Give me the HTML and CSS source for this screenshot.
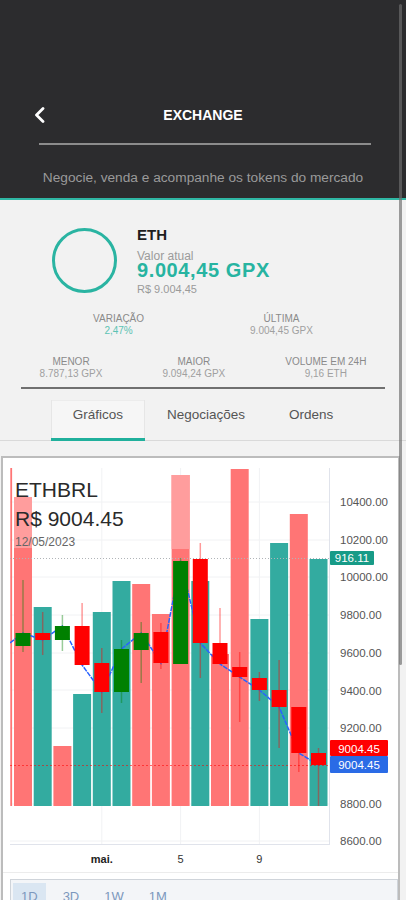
FILE: index.html
```html
<!DOCTYPE html>
<html lang="pt-BR">
<head>
<meta charset="utf-8">
<title>Exchange</title>
<link rel="stylesheet" href="styles.css">
</head>
<body>
<header class="top">
  <div class="titlebar">
    <span class="back"><svg width="12" height="16" viewBox="0 0 12 16"><path d="M9 1.5 L2.5 8 L9 14.5" fill="none" stroke="#fff" stroke-width="2.8" stroke-linecap="round" stroke-linejoin="round"/></svg></span>
    <h1 class="title">EXCHANGE</h1>
    <span></span>
  </div>
  <div class="rule"></div>
  <p class="subtitle">Negocie, venda e acompanhe os tokens do mercado</p>
</header>

<main class="content">
  <section class="token">
    <div class="coin"></div>
    <div class="token-info">
      <div class="sym">ETH</div>
      <div class="lbl">Valor atual</div>
      <div class="price">9.004,45 GPX</div>
      <div class="fiat">R$ 9.004,45</div>
    </div>
  </section>

  <section class="stats one">
    <div class="stat"><div class="stat-k">VARIAÇÃO</div><div class="stat-v up">2,47%</div></div>
    <div class="stat"><div class="stat-k">ÚLTIMA</div><div class="stat-v">9.004,45 GPX</div></div>
  </section>
  <section class="stats two">
    <div class="stat"><div class="stat-k">MENOR</div><div class="stat-v">8.787,13 GPX</div></div>
    <div class="stat"><div class="stat-k">MAIOR</div><div class="stat-v">9.094,24 GPX</div></div>
    <div class="stat"><div class="stat-k">VOLUME EM 24H</div><div class="stat-v">9,16 ETH</div></div>
  </section>
  <div class="divider"></div>

  <nav class="tabs">
    <div class="tab active">Gráficos</div>
    <div class="tab">Negociações</div>
    <div class="tab">Ordens</div>
  </nav>

  <section class="chart">
    <div class="chart-row">
      <div class="plot">
        <svg width="320" height="377" viewBox="10 468 320 377">
          <g class="grid">
            <line x1="10" x2="330" y1="502" y2="502"/>
            <line x1="10" x2="330" y1="540" y2="540"/>
            <line x1="10" x2="330" y1="577" y2="577"/>
            <line x1="10" x2="330" y1="615" y2="615"/>
            <line x1="10" x2="330" y1="653" y2="653"/>
            <line x1="10" x2="330" y1="690" y2="690"/>
            <line x1="10" x2="330" y1="728" y2="728"/>
            <line x1="10" x2="330" y1="804" y2="804"/>
            <line x1="10" x2="330" y1="841" y2="841"/>
            <line x1="101.8" x2="101.8" y1="468" y2="845"/>
            <line x1="180.6" x2="180.6" y1="468" y2="845"/>
            <line x1="259.4" x2="259.4" y1="468" y2="845"/>
          </g>
          <g>
            <rect class="vd" x="10.3" y="468" width="1.8" height="338"/>
            <rect class="vd" x="14" y="497" width="18" height="309"/>
            <rect class="vl" x="14" y="497" width="18" height="51"/>
            <rect class="vu" x="33.7" y="607" width="18" height="199"/>
            <rect class="vd" x="53.4" y="746" width="18" height="60"/>
            <rect class="vu" x="73.1" y="694" width="18" height="112"/>
            <rect class="vu" x="92.8" y="612" width="18" height="194"/>
            <rect class="vu" x="112.5" y="581" width="18" height="225"/>
            <rect class="vd" x="132.2" y="584" width="18" height="222"/>
            <rect class="vd" x="151.9" y="614" width="18" height="192"/>
            <rect class="vd" x="171.6" y="475" width="18" height="331"/>
            <rect class="vl" x="171.6" y="475" width="18" height="74"/>
            <rect class="vu" x="191.3" y="581" width="18" height="225"/>
            <rect class="vd" x="211" y="654" width="18" height="152"/>
            <rect class="vd" x="230.7" y="469" width="18" height="337"/>
            <rect class="vu" x="250.4" y="619" width="18" height="187"/>
            <rect class="vu" x="270.1" y="543" width="18" height="263"/>
            <rect class="vd" x="289.8" y="514" width="18" height="292"/>
            <rect class="vu" x="309.5" y="559" width="18" height="247"/>
          </g>
          <line class="pl-vol" x1="10" x2="330" y1="558.5" y2="558.5"/>
          <line class="pl-last" x1="10" x2="330" y1="765.5" y2="765.5"/>
          <polyline class="close" points="10,643 23,633 42.7,640 62.4,626 82.1,665 101.8,692 121.5,649 141.2,633 160.9,663 180.6,561 200.3,643 220,664 239.7,677 259.4,690 279.1,707 298.8,753 318.5,765"/>
          <g class="wu">
            <line x1="23" x2="23" y1="580" y2="652"/>
            <line x1="62.4" x2="62.4" y1="615" y2="651"/>
            <line x1="121.5" x2="121.5" y1="640" y2="703"/>
            <line x1="141.2" x2="141.2" y1="622" y2="683"/>
            <line x1="180.6" x2="180.6" y1="558" y2="664"/>
          </g>
          <g class="wd">
            <line x1="42.7" x2="42.7" y1="612" y2="655"/>
            <line x1="82.1" x2="82.1" y1="603" y2="665"/>
            <line x1="101.8" x2="101.8" y1="648" y2="713"/>
            <line x1="160.9" x2="160.9" y1="623" y2="669"/>
            <line x1="200.3" x2="200.3" y1="543" y2="678"/>
            <line x1="220" x2="220" y1="608" y2="664"/>
            <line x1="239.7" x2="239.7" y1="652" y2="722"/>
            <line x1="259.4" x2="259.4" y1="672" y2="701"/>
            <line x1="279.1" x2="279.1" y1="660" y2="748"/>
            <line x1="298.8" x2="298.8" y1="707" y2="772"/>
            <line x1="318.5" x2="318.5" y1="748" y2="806"/>
          </g>
          <g class="bu">
            <rect x="15.5" y="633" width="15" height="13"/>
            <rect x="54.9" y="626" width="15" height="14"/>
            <rect x="114" y="649" width="15" height="43"/>
            <rect x="133.7" y="633" width="15" height="17"/>
            <rect x="173.1" y="561" width="15" height="103"/>
          </g>
          <g class="bd">
            <rect x="35.2" y="633" width="15" height="7"/>
            <rect x="74.6" y="626" width="15" height="39"/>
            <rect x="94.3" y="663" width="15" height="29"/>
            <rect x="153.4" y="632" width="15" height="31"/>
            <rect x="192.8" y="559" width="15" height="84"/>
            <rect x="212.5" y="643" width="15" height="21"/>
            <rect x="232.2" y="667" width="15" height="10"/>
            <rect x="251.9" y="678" width="15" height="12"/>
            <rect x="271.6" y="690" width="15" height="17"/>
            <rect x="291.3" y="707" width="15" height="46"/>
            <rect x="311" y="753" width="15" height="12"/>
          </g>
          <line class="frame" x1="329.5" x2="329.5" y1="468" y2="845"/>
          <line class="frame" x1="10" x2="330" y1="844.5" y2="844.5"/>
        </svg>
        <div class="legend">
          <div class="pair">ETHBRL</div>
          <div class="last">R$ 9004.45</div>
          <div class="date">12/05/2023</div>
        </div>
      </div>
      <div class="axis">
        <svg width="68" height="377" viewBox="330 468 68 377">
          <text class="ax" x="340" y="506">10400.00</text>
          <text class="ax" x="340" y="543.7">10200.00</text>
          <text class="ax" x="340" y="581.4">10000.00</text>
          <text class="ax" x="340" y="619.1">9800.00</text>
          <text class="ax" x="340" y="656.8">9600.00</text>
          <text class="ax" x="340" y="694.5">9400.00</text>
          <text class="ax" x="340" y="732.2">9200.00</text>
          <text class="ax" x="340" y="807.6">8800.00</text>
          <text class="ax" x="340" y="845.3">8600.00</text>
          <rect class="tag-vol" x="330" y="551" width="44" height="14" rx="1"/>
          <text class="tag-t" x="352" y="562">916.11</text>
          <rect class="tag-red" x="330" y="740" width="58" height="16" rx="1"/>
          <text class="tag-t" x="359" y="752.5">9004.45</text>
          <rect class="tag-blue" x="330" y="756" width="58" height="17" rx="1"/>
          <text class="tag-t" x="359" y="769">9004.45</text>
        </svg>
      </div>
    </div>
    <div class="timeaxis">
      <svg width="320" height="27" viewBox="10 845 320 27">
        <text class="tx strong" x="101.8" y="863">mai.</text>
        <text class="tx" x="180.6" y="863">5</text>
        <text class="tx" x="259.4" y="863">9</text>
      </svg>
    </div>
    <div class="chart-sep"></div>
    <div class="toolbar">
      <span class="range active">1D</span>
      <span class="range">3D</span>
      <span class="range">1W</span>
      <span class="range">1M</span>
    </div>
  </section>
</main>

<div class="scrollthumb"></div>
</body>
</html>
```

FILE: styles.css
```css
* { box-sizing: border-box; margin: 0; padding: 0; }

html, body {
  width: 406px;
  height: 900px;
  overflow: hidden;
  background: #f2f2f2;
}

body {
  position: relative;
  font-family: "Liberation Sans", Arial, sans-serif;
}

/* header */
.top {
  height: 200px;
  background: #2c2c2e;
  border-bottom: 2px solid #2fb7a4;
  padding-top: 105px;
}
.titlebar {
  display: grid;
  grid-template-columns: 1fr auto 1fr;
  align-items: center;
  height: 20px;
}
.back {
  display: flex;
  align-items: center;
  padding-left: 34px;
  height: 20px;
}
.title {
  font-size: 14px;
  font-weight: 700;
  line-height: 20px;
  color: #fff;
}
.rule {
  height: 2px;
  background: #8c8c8c;
  margin: 18px 35px 0 39px;
}
.subtitle {
  margin-top: 24px;
  text-align: center;
  font-size: 13.7px;
  line-height: 18px;
  color: #9a9a9a;
}

/* token */
.token {
  display: flex;
  gap: 20px;
  padding-left: 52px;
  margin-top: 25.5px;
}
.coin {
  flex: none;
  width: 65px;
  height: 65px;
  margin-top: 2.5px;
  border: 3px solid #2ab4a2;
  border-radius: 50%;
}
.sym {
  font-size: 15px;
  font-weight: 700;
  line-height: 18px;
  color: #1e1e1e;
}
.lbl {
  margin-top: 6.9px;
  font-size: 12px;
  line-height: 12px;
  color: #9b9b9b;
}
.price {
  font-size: 20px;
  font-weight: 700;
  line-height: 16px;
  letter-spacing: 0.6px;
  color: #27b4a1;
}
.fiat {
  margin-top: 4.3px;
  font-size: 11px;
  line-height: 13px;
  color: #9a9a9a;
}

/* stats */
.stats {
  display: flex;
  justify-content: center;
  text-align: center;
  font-size: 10px;
  line-height: 12px;
}
.stats.one { gap: 106px; margin-top: 17.8px; }
.stats.two { gap: 60px; margin-top: 18.2px; }
.stat-k { color: #8a8a8a; }
.stat-v { color: #a0a0a0; }
.stat-v.up { color: #5cc3b4; }

.divider {
  height: 2px;
  background: #707070;
  margin: 7.3px 21px 0 21px;
}

/* tabs */
.tabs {
  display: flex;
  justify-content: center;
  margin-top: 11px;
  border-bottom: 1px solid #d9d9d9;
}
.tab {
  padding: 7px 22px 15px;
  margin-bottom: -1px;
  font-size: 13.5px;
  line-height: 16px;
  color: #555;
  border-bottom: 3px solid transparent;
}
.tab.active {
  background: #f6f6f6;
  border-bottom-color: #20b09c;
  box-shadow: inset 1px 0 #e6e6e6, inset -1px 0 #e6e6e6, inset 0 1px #ececec;
}

/* chart */
.chart {
  width: 399px;
  margin: 15px 0 0 1px;
  padding: 10px 0 0 7px;
  background: #fff;
  border: 2px solid #bcbcbc;
  border-bottom: none;
}
.chart-row { display: flex; }
.plot {
  position: relative;
  width: 320px;
  height: 377px;
}
.plot svg, .axis svg, .timeaxis svg { display: block; }

.grid line { stroke: #f1f2f4; stroke-width: 1; }
.vd { fill: #ff7575; }
.vl { fill: #ff9d9d; }
.vu { fill: #33aba0; }
.pl-vol { stroke: #b0b4b8; stroke-width: 1; stroke-dasharray: 1 2; }
.pl-last { stroke: rgba(255, 0, 0, 0.55); stroke-width: 1; stroke-dasharray: 2 2; }
.close { fill: none; stroke: #2962ff; stroke-width: 1.5; stroke-dasharray: 5 1; }
.wu line { stroke: #008000; stroke-opacity: 0.4; stroke-width: 1.5; }
.wd line { stroke: #ff0000; stroke-opacity: 0.4; stroke-width: 1.5; }
.bu rect { fill: #008000; }
.bd rect { fill: #ff0000; }
.frame { stroke: #e0e3eb; stroke-width: 1; }

.legend {
  position: absolute;
  left: 5px;
  top: 10.4px;
  color: #2a2a2a;
}
.pair { font-size: 21px; line-height: 24px; }
.last { font-size: 21px; line-height: 34px; }
.date { margin-top: -1px; font-size: 12px; line-height: 14px; color: #666; }

.axis { width: 68px; height: 377px; }
.ax { font-family: "Liberation Sans", Arial, sans-serif; font-size: 11.5px; fill: #555; }
.tag-vol { fill: #179b87; }
.tag-red { fill: #ff0000; }
.tag-blue { fill: #2a6be6; }
.tag-t {
  font-family: "Liberation Sans", Arial, sans-serif;
  font-size: 11.5px;
  fill: #fff;
  text-anchor: middle;
}

.timeaxis { width: 320px; height: 27px; }
.tx {
  font-family: "Liberation Sans", Arial, sans-serif;
  font-size: 11px;
  fill: #333;
  text-anchor: middle;
}
.tx.strong { font-weight: 700; fill: #222; }

.chart-sep {
  height: 1px;
  margin-left: -7px;
  background: #ececec;
}
.toolbar {
  display: flex;
  gap: 9px;
  width: 388px;
  height: 30px;
  margin-top: 6px;
  padding: 3px 2px 0;
  background: #f3f5f8;
  border: 1px solid #cfd4da;
  border-bottom: none;
}
.range {
  padding: 3.8px 8px 0;
  font-size: 13px;
  line-height: 20px;
  color: #7c98bd;
}
.range.active { background: #dae6f2; }

/* overlay scrollbar */
.scrollthumb {
  position: absolute;
  left: 399px;
  top: 4px;
  width: 3px;
  height: 661px;
  border-radius: 2px;
  background: rgba(110, 110, 110, 0.67);
}
```
